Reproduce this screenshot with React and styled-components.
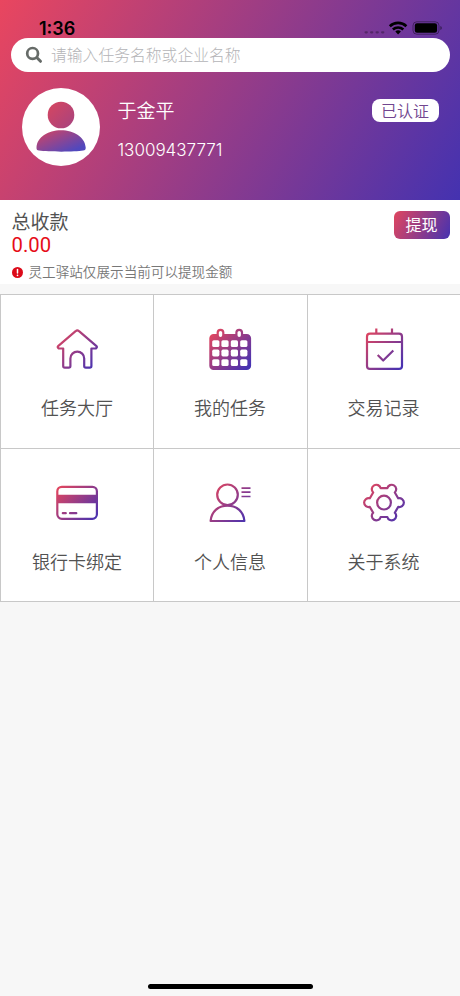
import styled, { createGlobalStyle } from 'styled-components'

const GlobalStyle = createGlobalStyle`
	* {
		box-sizing: border-box;
	}
	body {
		margin: 0;
		background: #f7f7f7;
		font-family: Inter, 'Noto Sans CJK SC', sans-serif;
		font-weight: 350;
		color: #525252;
	}
`

const Screen = styled.div`
	display: flex;
	flex-direction: column;
	height: 996px;
	overflow: hidden;
`

const Header = styled.header`
	height: 199.5px;
	padding: 17px 10.5px 0 11px;
	background: linear-gradient(120deg, #e9465f 0%, #4432b0 100%);
`

const StatusBar = styled.div`
	display: flex;
	align-items: center;
	justify-content: space-between;
	height: 21px;
	padding: 0 8px 0 28px;
	color: #000;
`

const Time = styled.span`
	padding-top: 2px;
	font-size: 18px;
	font-weight: 600;
	line-height: 21px;
`

const SearchBar = styled.div`
	display: flex;
	align-items: center;
	gap: 8px;
	height: 34px;
	padding: 0 14px;
	border-radius: 17px;
	background: #fff;
`

const Placeholder = styled.span`
	padding-top: 1px;
	font-size: 15.8px;
	font-weight: 300;
	line-height: 33px;
	color: #b4b4b7;
`

const Profile = styled.div`
	display: flex;
	align-items: flex-start;
	padding: 16px 11px 0 11.4px;
`

const Avatar = styled.div`
	width: 78px;
	height: 78px;
	border-radius: 50%;
	background: #fff;
`

const ProfileText = styled.div`
	flex: 1;
	display: flex;
	flex-direction: column;
	gap: 12px;
	padding: 10px 0 0 17px;
	color: #fff;
`

const Name = styled.span`
	font-size: 19px;
	line-height: 28px;
`

const Phone = styled.span`
	font-size: 17px;
	line-height: 24px;
`

const Badge = styled.span`
	width: 67px;
	height: 23px;
	margin-top: 11px;
	border-radius: 8px;
	background: #fff;
	color: #71468f;
	font-size: 16px;
	line-height: 24px;
	text-align: center;
`

const Balance = styled.section`
	display: flex;
	justify-content: space-between;
	height: 84px;
	padding: 11px 10.5px 0 11.5px;
	background: #fff;
`

const BalanceTitle = styled.div`
	font-size: 19px;
	font-weight: 400;
	line-height: 24px;
`

const Amount = styled.div`
	font-family: Roboto, sans-serif;
	font-size: 20.3px;
	font-weight: 400;
	line-height: 20px;
	color: #e60d18;
`

const Hint = styled.div`
	display: flex;
	align-items: center;
	gap: 6px;
	margin-top: 7.5px;
	font-size: 13.6px;
	line-height: 20px;
	color: #777;
`

const Withdraw = styled.button`
	width: 56px;
	height: 28px;
	padding: 0;
	border: 0;
	border-radius: 6px;
	background: linear-gradient(115deg, #e0465f 0%, #4632b0 100%);
	color: #fff;
	font-family: inherit;
	font-size: 16px;
	font-weight: 400;
	line-height: 28px;
`

const Menu = styled.main`
	display: grid;
	grid-template-columns: 153px 154px 1fr;
	margin-top: 10.5px;
	border: solid #c8c8c8;
	border-width: 1px 0 0 1px;
	background: #fff;
`

const MenuItem = styled.div`
	display: flex;
	flex-direction: column;
	align-items: center;
	height: 153.5px;
	padding-top: 30px;
	border: solid #c8c8c8;
	border-width: 0 1px 1px 0;
	background: #fff;

	&:nth-child(3n + 2) {
		padding-right: 1px;
	}

	&:nth-child(3n) {
		padding-right: 1px;
		border-right-width: 0;
	}
`

const MenuLabel = styled.span`
	margin-top: 22px;
	font-size: 18px;
	line-height: 28px;
`

const Footer = styled.footer`
	display: flex;
	justify-content: center;
	margin-top: auto;
	padding-bottom: 7px;
`

const HomeIndicator = styled.div`
	width: 165px;
	height: 5.5px;
	border-radius: 3px;
	background: #000;
`

const StatusIcons = () => (
	<svg width="80" height="16" viewBox="362 20 80 16">
		<g fill="#000" fillOpacity="0.3">
			{[366, 371.5, 377, 382.5].map((x) => (
				<rect key={x} x={x - 1.5} y="31.2" width="3.4" height="2.2" rx="1.1" />
			))}
		</g>
		<g fill="none" stroke="#000" strokeWidth="2.6">
			<path d="M389.8 26.2a12 12 0 0 1 16.6 0" />
			<path d="M392.9 29.5a7.6 7.6 0 0 1 10.4 0" />
		</g>
		<path d="M395.3 31.6a4.2 4.2 0 0 1 5.6 0L398.1 34.4z" fill="#000" />
		<rect x="413" y="21.8" width="26" height="12.4" rx="3.8" fill="none" stroke="#000" strokeOpacity="0.4" />
		<rect x="414.8" y="23.3" width="22.3" height="9.4" rx="2.2" fill="#000" />
		<path d="M440.4 26v4q1.4-.5 1.4-2t-1.4-2z" fill="#000" fillOpacity="0.5" />
	</svg>
)

const SearchIcon = () => (
	<svg width="18" height="18" viewBox="0 0 18 18" fill="none" stroke="#666b68" strokeLinecap="round">
		<circle cx="7.6" cy="7.4" r="5.4" strokeWidth="2.7" />
		<path d="M12 11.8l3.5 3.5" strokeWidth="3" />
	</svg>
)

const AvatarIcon = () => (
	<svg width="78" height="78" viewBox="0 0 78 78">
		<defs>
			<linearGradient id="avatar-head" x1="0" y1="0" x2="1" y2="1">
				<stop offset="0" stopColor="#d8465f" />
				<stop offset="1" stopColor="#a54380" />
			</linearGradient>
			<linearGradient id="avatar-body" x1="0" y1="0" x2="1" y2="1">
				<stop offset="0.15" stopColor="#c0446f" />
				<stop offset="0.85" stopColor="#5148bd" />
			</linearGradient>
		</defs>
		<circle cx="39" cy="27" r="13.3" fill="url(#avatar-head)" />
		<path
			d="M14.5 59.5C15 49 26 42.2 39 42.2S63 49 63.7 59.5c.1 2-.6 2.8-2.6 3.1C53 64 26 64 17 62.6c-2-.3-2.6-1.1-2.5-3.1z"
			fill="url(#avatar-body)"
		/>
	</svg>
)

const AlertIcon = () => (
	<svg width="11" height="11" viewBox="0 0 11 11">
		<circle cx="5.5" cy="5.5" r="5.5" fill="#dc0a19" />
		<path d="M5.5 2.4v3.6" stroke="#fff" strokeWidth="1.5" strokeLinecap="round" />
		<circle cx="5.5" cy="8.3" r=".85" fill="#fff" />
	</svg>
)

// six rounded teeth joined by short straight valleys
const gearPath = () => {
	const point = (deg) => {
		const a = (deg * Math.PI) / 180
		return `${(24 + 14.8 * Math.cos(a)).toFixed(2)} ${(23.6 + 14.8 * Math.sin(a)).toFixed(2)}`
	}
	let d = `M${point(-17)}`
	for (let deg = 0; deg < 360; deg += 60) {
		d += `A4.5 4.5 0 1 1 ${point(deg + 17)}L${point(deg + 43)}`
	}
	return d + 'z'
}

const icons = {
	home: (
		<path d="M24.3 5.4q.8 0 1.7.8L43.2 20.8q1.2 1.2.2 2.2-.4.5-1.4.5h-3.6V41q0 1.6-1.6 1.6h-4q-1.6 0-1.6-1.6v-7.5a6.9 6.9 0 0 0-13.8 0V41q0 1.6-1.6 1.6h-4q-1.6 0-1.6-1.6V23.5H6.6q-1 0-1.4-.5-1-1 .2-2.2L22.6 6.2q.9-.8 1.7-.8z" />
	),
	calendar: (
		<>
			<rect x="4.4" y="10" width="39.6" height="34" rx="3.2" fill="url(#icon)" />
			{[14.5, 33.2].map((x) => (
				<rect key={x} x={x - 2.8} y="4.8" width="5.6" height="8.2" rx="2.8" fill="#fff" />
			))}
			<g fill="#fff" stroke="none">
				{[15.2, 24.6, 34.2].map((y) =>
					[6.2, 15.4, 24.8, 34.2].map((x) => (
						<rect key={`${x}-${y}`} x={x} y={y} width="7.2" height="6.8" rx="1.6" />
					))
				)}
			</g>
		</>
	),
	record: (
		<>
			<rect x="7" y="8.7" width="35" height="35.2" rx="3" />
			<path d="M7 17h35M16.3 3.5v5M32 3.5v5M17.7 30l5.5 5.5L33.3 25.5" />
		</>
	),
	card: (
		<>
			<rect x="4.3" y="7.8" width="39.6" height="32" rx="4.5" />
			<path d="M4.3 15.8h39.6v8.4H4.3z" fill="url(#icon)" stroke="none" />
			<path d="M9.8 34.2h3M17 34.2h6.3" strokeLinecap="round" />
		</>
	),
	person: (
		<>
			<circle cx="21.5" cy="15.8" r="10.3" />
			<path d="M4.6 42C5.3 33 12 26.6 21.5 26.6S37.7 33 38.4 42z" />
			<path d="M35.5 9.2h9M35.5 13.2h9M35.5 17.5h9" strokeWidth="1.7" />
		</>
	),
	gear: (
		<>
			<path d={gearPath()} />
			<circle cx="24" cy="23.6" r="6.9" />
		</>
	),
}

const MenuIcon = ({ name }) => (
	<svg width="48" height="48" viewBox="0 0 48 48" fill="none" stroke="url(#icon)" strokeWidth="2.2" strokeLinejoin="round">
		<defs>
			<linearGradient id="icon" gradientUnits="userSpaceOnUse" x1="6" y1="8" x2="42" y2="42">
				<stop offset="0" stopColor="#e0455f" />
				<stop offset="1" stopColor="#4632b2" />
			</linearGradient>
		</defs>
		{icons[name]}
	</svg>
)

const items = [
	{ icon: 'home', label: '任务大厅' },
	{ icon: 'calendar', label: '我的任务' },
	{ icon: 'record', label: '交易记录' },
	{ icon: 'card', label: '银行卡绑定' },
	{ icon: 'person', label: '个人信息' },
	{ icon: 'gear', label: '关于系统' },
]

const App = () => {
	return (
		<Screen>
			<GlobalStyle />
			<Header>
				<StatusBar>
					<Time>1:36</Time>
					<StatusIcons />
				</StatusBar>
				<SearchBar>
					<SearchIcon />
					<Placeholder>请输入任务名称或企业名称</Placeholder>
				</SearchBar>
				<Profile>
					<Avatar>
						<AvatarIcon />
					</Avatar>
					<ProfileText>
						<Name>于金平</Name>
						<Phone>13009437771</Phone>
					</ProfileText>
					<Badge>已认证</Badge>
				</Profile>
			</Header>
			<Balance>
				<div>
					<BalanceTitle>总收款</BalanceTitle>
					<Amount>0.00</Amount>
					<Hint>
						<AlertIcon />
						灵工驿站仅展示当前可以提现金额
					</Hint>
				</div>
				<Withdraw>提现</Withdraw>
			</Balance>
			<Menu>
				{items.map((item) => (
					<MenuItem key={item.label}>
						<MenuIcon name={item.icon} />
						<MenuLabel>{item.label}</MenuLabel>
					</MenuItem>
				))}
			</Menu>
			<Footer>
				<HomeIndicator />
			</Footer>
		</Screen>
	)
}

export default App
